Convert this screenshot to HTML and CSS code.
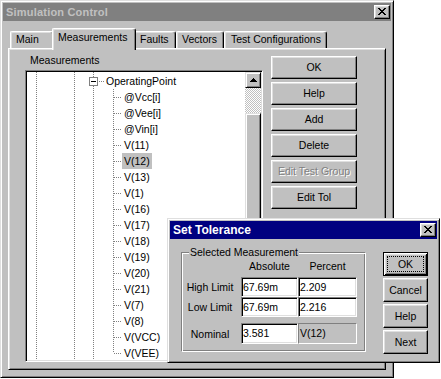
FILE: index.html
```html
<!DOCTYPE html>
<html>
<head>
<meta charset="utf-8">
<title>Simulation Control</title>
<link rel="stylesheet" href="styles.css">
</head>
<body>
<div class="win main-win">
  <div class="titlebar inactive">
    <span class="title">Simulation Control</span>
    <span class="cap-btn"><svg class="x-glyph" width="8" height="7" viewBox="0 0 8 7" shape-rendering="crispEdges"><path d="M0 0h2v1H0zM6 0h2v1H6zM1 1h2v1H1zM5 1h2v1H5zM2 2h4v1H2zM3 3h2v1H3zM2 4h4v1H2zM1 5h2v1H1zM5 5h2v1H5zM0 6h2v1H0zM6 6h2v1H6z"/></svg></span>
  </div>
  <div class="tabs">
    <div class="tab w-main">Main</div>
    <div class="tab sel w-meas">Measurements</div>
    <div class="tab w-faults">Faults</div>
    <div class="tab w-vec">Vectors</div>
    <div class="tab w-test">Test Configurations</div>
  </div>
  <div class="panel">
    <div class="list-col">
      <div class="caption">Measurements</div>
      <div class="tree">
        <div class="tree-items">
          <div class="row op">
            <span class="expander"><span class="minus"></span></span>
            <span class="hconn short"></span>
            <span class="lbl">OperatingPoint</span>
          </div>
          <div class="children">
            <div class="row leaf"><span class="hconn"></span><span class="lbl">@Vcc[i]</span></div>
            <div class="row leaf"><span class="hconn"></span><span class="lbl">@Vee[i]</span></div>
            <div class="row leaf"><span class="hconn"></span><span class="lbl">@Vin[i]</span></div>
            <div class="row leaf"><span class="hconn"></span><span class="lbl">V(11)</span></div>
            <div class="row leaf"><span class="hconn"></span><span class="lbl selected">V(12)</span></div>
            <div class="row leaf"><span class="hconn"></span><span class="lbl">V(13)</span></div>
            <div class="row leaf"><span class="hconn"></span><span class="lbl">V(1)</span></div>
            <div class="row leaf"><span class="hconn"></span><span class="lbl">V(16)</span></div>
            <div class="row leaf"><span class="hconn"></span><span class="lbl">V(17)</span></div>
            <div class="row leaf"><span class="hconn"></span><span class="lbl">V(18)</span></div>
            <div class="row leaf"><span class="hconn"></span><span class="lbl">V(19)</span></div>
            <div class="row leaf"><span class="hconn"></span><span class="lbl">V(20)</span></div>
            <div class="row leaf"><span class="hconn"></span><span class="lbl">V(21)</span></div>
            <div class="row leaf"><span class="hconn"></span><span class="lbl">V(7)</span></div>
            <div class="row leaf"><span class="hconn"></span><span class="lbl">V(8)</span></div>
            <div class="row leaf"><span class="hconn"></span><span class="lbl">V(VCC)</span></div>
            <div class="row leaf"><span class="hconn"></span><span class="lbl">V(VEE)</span></div>
          </div>
        </div>
        <div class="vscroll">
          <div class="sb-btn"><svg width="7" height="4" viewBox="0 0 7 4" shape-rendering="crispEdges"><path d="M3 0h1v1H3zM2 1h3v1H2zM1 2h5v1H1zM0 3h7v1H0z"/></svg></div>
          <div class="sb-track top"></div>
          <div class="sb-thumb"></div>
          <div class="sb-track rest"></div>
          <div class="sb-btn"><svg width="7" height="4" viewBox="0 0 7 4" shape-rendering="crispEdges"><path d="M0 0h7v1H0zM1 1h5v1H1zM2 2h3v1H2zM3 3h1v1H3z"/></svg></div>
        </div>
      </div>
    </div>
    <div class="btn-col">
      <div class="btn">OK</div>
      <div class="btn">Help</div>
      <div class="btn">Add</div>
      <div class="btn">Delete</div>
      <div class="btn disabled">Edit Test Group</div>
      <div class="btn">Edit Tol</div>
    </div>
  </div>
</div>

<div class="win dialog">
  <div class="titlebar active">
    <span class="title big">Set Tolerance</span>
    <span class="cap-btn"><svg class="x-glyph" width="8" height="7" viewBox="0 0 8 7" shape-rendering="crispEdges"><path d="M0 0h2v1H0zM6 0h2v1H6zM1 1h2v1H1zM5 1h2v1H5zM2 2h4v1H2zM3 3h2v1H3zM2 4h4v1H2zM1 5h2v1H1zM5 5h2v1H5zM0 6h2v1H0zM6 6h2v1H6z"/></svg></span>
  </div>
  <div class="dlg-body">
    <fieldset class="group">
      <legend>Selected Measurement</legend>
      <div class="tol-grid">
        <div></div>
        <div class="col-head">Absolute</div>
        <div class="col-head">Percent</div>

        <div class="row-lbl">High Limit</div>
        <div class="field">67.69m</div>
        <div class="field">2.209</div>

        <div class="row-lbl">Low Limit</div>
        <div class="field">67.69m</div>
        <div class="field">2.216</div>

        <div class="row-lbl nom">Nominal</div>
        <div class="field nom">3.581</div>
        <div class="field nom static">V(12)</div>
      </div>
    </fieldset>
    <div class="dlg-btns">
      <div class="btn dbtn default"><span class="focus">OK</span></div>
      <div class="btn dbtn">Cancel</div>
      <div class="btn dbtn">Help</div>
      <div class="btn dbtn">Next</div>
    </div>
  </div>
</div>
</body>
</html>
```
FILE: styles.css
```css
* { box-sizing: border-box; }
html, body { margin: 0; padding: 0; }
body {
  background: #fff;
  width: 441px;
  height: 379px;
  overflow: hidden;
  position: relative;
  font-family: "Liberation Sans", Arial, sans-serif;
  font-size: 10.5px;
  line-height: 13px;
  color: #000;
}

/* ---------- windows ---------- */
.win {
  background: #c0c0c0;
  border: 1px solid;
  border-color: #dfdfdf #000 #000 #dfdfdf;
  box-shadow: inset 1px 1px #fff, inset -1px -1px #808080;
  padding: 2px;
}
.main-win { width: 394px; height: 378px; }

.titlebar {
  height: 18px;
  display: flex;
  align-items: center;
  justify-content: space-between;
  padding: 0 1px 0 3px;
}
.titlebar.inactive { background: #808080; color: #c0c0c0; }
.titlebar.active { background: #000080; color: #fff; }
.title { font-weight: bold; font-size: 11px; letter-spacing: 0.2px; }
.title.big { font-size: 12px; letter-spacing: 0; }

.cap-btn {
  width: 16px;
  height: 14px;
  background: #c0c0c0;
  border: 1px solid;
  border-color: #fff #000 #000 #fff;
  box-shadow: inset -1px -1px #808080, inset 1px 1px #dfdfdf;
  display: flex;
  align-items: center;
  justify-content: center;
}
.x-glyph { display: block; margin-top: -1px; }

/* ---------- tabs ---------- */
.tabs {
  display: flex;
  align-items: flex-end;
  height: 27px;
  padding-left: 7px;
  position: relative;
  z-index: 1;
}
.tab {
  height: 17px;
  background: #c0c0c0;
  border: 1px solid;
  border-bottom: none;
  border-color: #fff #000 #000 #fff;
  border-radius: 2px 3px 0 0;
  box-shadow: inset -1px 0 #808080, inset 1px 1px #dfdfdf;
  padding: 1px 0 0 5px;
  white-space: nowrap;
}
.tab.sel {
  height: 22px;
  margin: 0 -2px -2px;
  padding-top: 2px;
  position: relative;
  z-index: 2;
}
.w-main { width: 44px; }
.w-meas { width: 84px; }
.w-faults { width: 42px; }
.w-vec { width: 48px; }
.w-test { width: 103px; padding-left: 6px; }

/* ---------- tab panel ---------- */
.panel {
  margin-left: 5px;
  width: 378px;
  height: 322px;
  border: 1px solid;
  border-color: #fff #000 #000 #fff;
  box-shadow: inset 1px 1px #dfdfdf, inset -1px -1px #808080;
  display: flex;
  align-items: flex-start;
  padding: 5px 0 0 16px;
}
.caption { padding-left: 5px; height: 13px; }

.tree {
  margin-top: 3px;
  width: 238px;
  height: 292px;
  background: #fff;
  border: 1px solid;
  border-color: #808080 #fff #fff #808080;
  box-shadow: inset 1px 1px #000, inset -1px -1px #dfdfdf;
  padding: 1px;
  display: flex;
  overflow: hidden;
}
.tree-items {
  flex: 1;
  padding-top: 1px;
  background-color: #fff;
  background-image:
    repeating-linear-gradient(to bottom, #808080 0 1px, transparent 1px 2px),
    repeating-linear-gradient(to bottom, #808080 0 1px, transparent 1px 2px),
    repeating-linear-gradient(to bottom, #808080 0 1px, transparent 1px 2px);
  background-position: 9px 0, 47px 0, 66px 0;
  background-size: 1px 100%;
  background-repeat: no-repeat;
}
.row {
  height: 16px;
  display: flex;
  align-items: center;
}
.row.op { padding-left: 62px; }
.row.leaf { padding-left: 86px; }
.expander {
  width: 9px;
  height: 9px;
  background: #fff;
  border: 1px solid #808080;
  display: flex;
  align-items: center;
  justify-content: center;
}
.minus { width: 5px; height: 1px; background: #000; }
.hconn {
  width: 9px;
  height: 1px;
  background: repeating-linear-gradient(to right, transparent 0 1px, #808080 1px 2px);
}
.hconn.short { width: 6px; }
.lbl { height: 16px; line-height: 16px; padding: 0 2px; white-space: nowrap; }
.lbl.selected { background: #c0c0c0; }
.children {
  background-image: repeating-linear-gradient(to bottom, #808080 0 1px, transparent 1px 2px);
  background-position: 86px 0;
  background-size: 1px calc(100% - 8px);
  background-repeat: no-repeat;
}

.vscroll {
  width: 16px;
  display: flex;
  flex-direction: column;
  background-image: repeating-conic-gradient(#c0c0c0 0 25%, #fff 0 50%);
  background-size: 2px 2px;
}
.sb-btn, .sb-thumb {
  background: #c0c0c0;
  border: 1px solid;
  border-color: #dfdfdf #000 #000 #dfdfdf;
  box-shadow: inset 1px 1px #fff, inset -1px -1px #808080;
}
.sb-btn {
  height: 16px;
  flex: none;
  display: flex;
  align-items: center;
  justify-content: center;
}
.sb-btn svg { display: block; }
.sb-track.top { height: 25px; flex: none; }
.sb-thumb { height: 160px; flex: none; }
.sb-track.rest { flex: 1; }

/* ---------- buttons ---------- */
.btn-col {
  display: flex;
  flex-direction: column;
  gap: 3px;
  margin: 2px 0 0 8px;
}
.btn {
  width: 86px;
  height: 23px;
  background: #c0c0c0;
  border: 1px solid;
  border-color: #fff #000 #000 #fff;
  box-shadow: inset -1px -1px #808080, inset 1px 1px #dfdfdf;
  display: flex;
  align-items: center;
  justify-content: center;
  white-space: nowrap;
}
.btn.disabled { color: #808080; text-shadow: 1px 1px #fff; }

/* ---------- dialog ---------- */
.dialog {
  position: absolute;
  left: 167px;
  top: 218px;
  width: 273px;
  height: 145px;
}
.dlg-body {
  display: flex;
  align-items: flex-start;
  padding: 7px 0 0 11px;
}
fieldset.group {
  margin: 0;
  padding: 0 7px 7px 0;
  width: 185px;
  min-width: 0;
  border: 1px solid;
  border-color: #808080 #fff #fff #808080;
  box-shadow: inset 1px 1px #fff, inset -1px -1px #808080;
}
fieldset.group legend {
  margin-left: 7px;
  padding: 0 1px;
  line-height: 13px;
  background: #c0c0c0;
}
.tol-grid {
  display: grid;
  grid-template-columns: 58px 57px 59px;
  grid-template-rows: 18px 20px 20px 27px;
  margin-left: 1px;
}
.col-head { text-align: center; padding-top: 1px; }
.row-lbl { text-align: center; padding-right: 4px; align-self: center; }
.row-lbl.nom { align-self: end; padding-bottom: 3px; }
.field {
  background: #fff;
  border: 1px solid;
  border-color: #808080 #fff #fff #808080;
  box-shadow: inset 1px 1px #000, inset -1px -1px #dfdfdf;
  padding: 3px 0 0 1px;
  white-space: nowrap;
}
.field.nom { align-self: end; height: 21px; }
.field.static { background: #c0c0c0; box-shadow: none; }

.dlg-btns {
  display: flex;
  flex-direction: column;
  gap: 2px;
  margin: 6px 0 0 17px;
}
.btn.dbtn { width: 45px; height: 24px; }
.btn.default {
  border-color: #000;
  box-shadow: inset 1px 1px #fff, inset -1px -1px #000, inset 2px 2px #dfdfdf, inset -2px -2px #808080;
  padding: 3px;
}
.focus {
  flex: 1;
  align-self: stretch;
  border: 1px dotted #000;
  display: flex;
  align-items: center;
  justify-content: center;
}
```
